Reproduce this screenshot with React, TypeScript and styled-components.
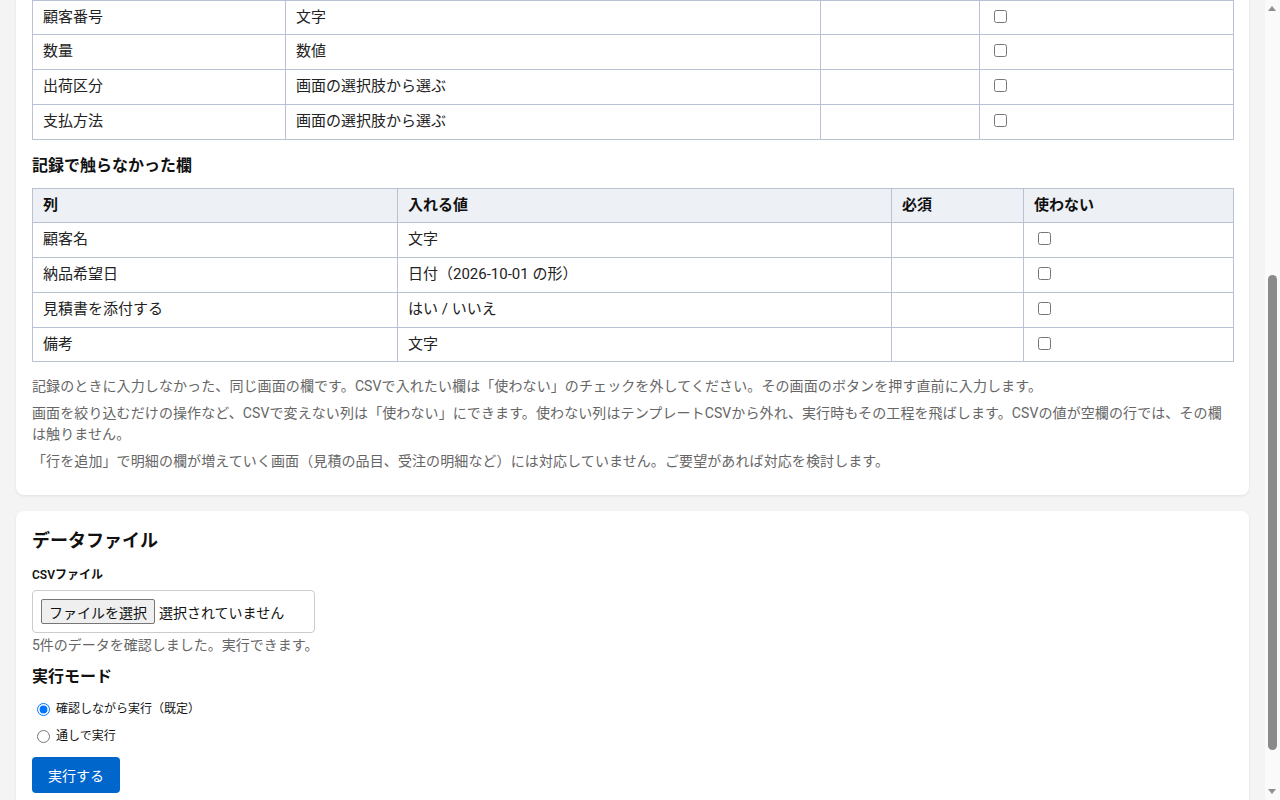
import React, { useLayoutEffect, useRef } from "react";
import styled, { createGlobalStyle } from "styled-components";

interface FieldRow {
    name: string;
    value: string;
    required?: boolean;
}

const touchedRows: FieldRow[] = [
    { name: "受注番号", value: "文字", required: true },
    { name: "受注日", value: "日付（2026-10-01 の形）", required: true },
    { name: "得意先コード", value: "文字", required: true },
    { name: "品目コード", value: "文字" },
    { name: "単価", value: "数値" },
    { name: "顧客番号", value: "文字" },
    { name: "数量", value: "数値" },
    { name: "出荷区分", value: "画面の選択肢から選ぶ" },
    { name: "支払方法", value: "画面の選択肢から選ぶ" },
];

const untouchedRows: FieldRow[] = [
    { name: "顧客名", value: "文字" },
    { name: "納品希望日", value: "日付（2026-10-01 の形）" },
    { name: "見積書を添付する", value: "はい / いいえ" },
    { name: "備考", value: "文字" },
];

const GlobalStyle = createGlobalStyle`
    html, body {
        margin: 0;
        background: #f4f4f4;
        font-family: Roboto, "Noto Sans CJK JP", sans-serif;
        color: #222;
    }
    * { box-sizing: border-box; }
`;

const Page = styled.div`
    display: flex;
    flex-direction: column;
    gap: 16px;
    margin-right: 15px;
    padding: 16px 16px 52px;
`;

/* the browser's scrollbar, drawn since the headless shot hides it */
const ScrollTrack = styled.div`
    position: fixed;
    top: 0;
    right: 0;
    width: 15px;
    height: 100vh;
    background: #fafafa;
`;

const ScrollThumb = styled.div`
    position: absolute;
    left: 3px;
    top: 275px;
    width: 9px;
    height: 475px;
    border-radius: 5px;
    background: #8a8a8a;
`;

const ScrollArrow = styled.div<{ $down?: boolean }>`
    position: absolute;
    left: 3px;
    ${({ $down }) => ($down ? "bottom: 6px;" : "top: 6px;")}
    width: 0;
    height: 0;
    border-left: 4.5px solid transparent;
    border-right: 4.5px solid transparent;
    ${({ $down }) =>
        $down ? "border-top: 5px solid #8f8f8f;" : "border-bottom: 5px solid #8f8f8f;"}
`;

const Card = styled.section`
    background: #fff;
    border-radius: 8px;
    padding: 16px;
    box-shadow: 0 1px 3px rgba(0, 0, 0, 0.08);
`;

const CardTitle = styled.h2`
    margin: 0;
    font-size: 18px;
    line-height: 27px;
    font-weight: 700;
    color: #111;
`;

const SectionTitle = styled.h3<{ $top?: number }>`
    margin: ${({ $top }) => $top ?? 14}px 0 10px;
    font-size: 16px;
    line-height: 24px;
    font-weight: 700;
    color: #111;
`;

const Lead = styled.p`
    margin: 6px 0 0;
    font-size: 14px;
    line-height: 21px;
    color: #666;
`;

const Table = styled.table`
    width: 100%;
    border-collapse: collapse;
    table-layout: fixed;
    font-size: 15px;
`;

const Col = styled.col<{ $w: number }>`
    width: ${({ $w }) => $w}px;
`;

const Th = styled.th`
    background: #edf0f5;
    border: 1px solid #b8c2d3;
    padding: 6px 10px;
    text-align: left;
    font-weight: 700;
    line-height: 1.45;
    color: #111;
`;

const Td = styled.td`
    border: 1px solid #b8c2d3;
    padding: 6px 10px;
    line-height: 1.45;
    color: #222;
`;

const Check = styled.input.attrs({ type: "checkbox" })`
    margin: 0 3px 0 4px;
    vertical-align: -1px;
`;

const Notes = styled.div`
    margin-top: 14px;
    padding-bottom: 1px;
`;

const Note = styled.p`
    margin: 0 0 6px;
    font-size: 14px;
    line-height: 21px;
    letter-spacing: 0.1px;
    color: #666;
`;

const FieldLabel = styled.label`
    display: block;
    margin: 12px 0 6px;
    font-size: 12px;
    line-height: 18px;
    font-weight: 600;
    color: #111;
`;

const FileBox = styled.label`
    display: flex;
    align-items: center;
    gap: 4px;
    width: 283px;
    height: 43px;
    padding: 8px;
    border: 1px solid #ccc;
    border-radius: 4px;
    font-size: 14px;
    color: #111;
    cursor: pointer;

    input {
        display: none;
    }
`;

const FileButton = styled.span`
    display: inline-flex;
    align-items: center;
    height: 25px;
    padding: 0 7px;
    background: #efefef;
    border: 1px solid #767676;
    border-radius: 2px;
`;

const Status = styled.p`
    margin: 2px 0 0;
    font-size: 14px;
    line-height: 21px;
    color: #666;
`;

const RadioGroup = styled.div`
    display: flex;
    flex-direction: column;
    gap: 6px;
    margin: 10px 0 10px;
`;

const RadioRow = styled.label`
    display: flex;
    align-items: center;
    gap: 6px;
    font-size: 12px;
    line-height: 21px;
    color: #111;

    input {
        margin: 0 0 0 5px;
    }
`;

const RunButton = styled.button`
    height: 36px;
    padding: 0 16px;
    border: none;
    border-radius: 4px;
    background: #0066cc;
    color: #fff;
    font-family: inherit;
    font-size: 14px;
    cursor: pointer;
`;

const FieldTable: React.FC<{
    rows: FieldRow[];
    widths: number[];
    anchor?: string;
    anchorRef?: React.Ref<HTMLTableRowElement>;
}> = ({ rows, widths, anchor, anchorRef }) => (
    <Table>
        <colgroup>
            {widths.map((w, i) => (
                <Col key={i} $w={w} />
            ))}
        </colgroup>
        <thead>
            <tr>
                <Th>列</Th>
                <Th>入れる値</Th>
                <Th>必須</Th>
                <Th>使わない</Th>
            </tr>
        </thead>
        <tbody>
            {rows.map((row) => (
                <tr key={row.name} ref={row.name === anchor ? anchorRef : undefined}>
                    <Td>{row.name}</Td>
                    <Td>{row.value}</Td>
                    <Td>{row.required ? "必須" : ""}</Td>
                    <Td>{!row.required && <Check />}</Td>
                </tr>
            ))}
        </tbody>
    </Table>
);

const App: React.FC = () => {
    const anchorRef = useRef<HTMLTableRowElement>(null);

    // open the page scrolled to the column settings, as in the shot
    useLayoutEffect(() => {
        const scroll = () => {
            if (!anchorRef.current) return;
            const top = anchorRef.current.getBoundingClientRect().top + window.scrollY;
            window.scrollTo(0, top);
        };
        scroll();
        const t = setTimeout(scroll, 0);
        window.addEventListener("load", scroll);
        return () => {
            clearTimeout(t);
            window.removeEventListener("load", scroll);
        };
    }, []);

    return (
        <>
            <GlobalStyle />
            <Page>
                <Card>
                    <CardTitle>CSVで一括実行</CardTitle>
                    <Lead>記録した操作を、CSVの行ごとにくり返し実行します。</Lead>
                </Card>

                <Card>
                    <CardTitle>列の設定</CardTitle>
                    <Lead>CSVの列と、記録した画面の欄の対応です。</Lead>
                    <SectionTitle>記録で触った欄</SectionTitle>
                    <FieldTable
                        rows={touchedRows}
                        widths={[253, 535, 159, 254]}
                        anchor="顧客番号"
                        anchorRef={anchorRef}
                    />

                    <SectionTitle>記録で触らなかった欄</SectionTitle>
                    <FieldTable rows={untouchedRows} widths={[365, 494, 132, 210]} />

                    <Notes>
                        <Note>記録のときに入力しなかった、同じ画面の欄です。CSVで入れたい欄は「使わない」のチェックを外してください。その画面のボタンを押す直前に入力します。</Note>
                        <Note>画面を絞り込むだけの操作など、CSVで変えない列は「使わない」にできます。使わない列はテンプレートCSVから外れ、実行時もその工程を飛ばします。CSVの値が空欄の行では、その欄は触りません。</Note>
                        <Note>「行を追加」で明細の欄が増えていく画面（見積の品目、受注の明細など）には対応していません。ご要望があれば対応を検討します。</Note>
                    </Notes>
                </Card>

                <Card>
                    <CardTitle>データファイル</CardTitle>
                    <FieldLabel htmlFor="csv">CSVファイル</FieldLabel>
                    <FileBox>
                        <input id="csv" type="file" accept=".csv" />
                        <FileButton>ファイルを選択</FileButton>
                        <span>選択されていません</span>
                    </FileBox>
                    <Status>5件のデータを確認しました。実行できます。</Status>

                    <SectionTitle $top={9}>実行モード</SectionTitle>
                    <RadioGroup>
                        <RadioRow>
                            <input type="radio" name="mode" defaultChecked />
                            確認しながら実行（既定）
                        </RadioRow>
                        <RadioRow>
                            <input type="radio" name="mode" />
                            通しで実行
                        </RadioRow>
                    </RadioGroup>
                    <RunButton type="button">実行する</RunButton>
                </Card>
            </Page>
            <ScrollTrack>
                <ScrollArrow />
                <ScrollThumb />
                <ScrollArrow $down />
            </ScrollTrack>
        </>
    );
};

export default App;
